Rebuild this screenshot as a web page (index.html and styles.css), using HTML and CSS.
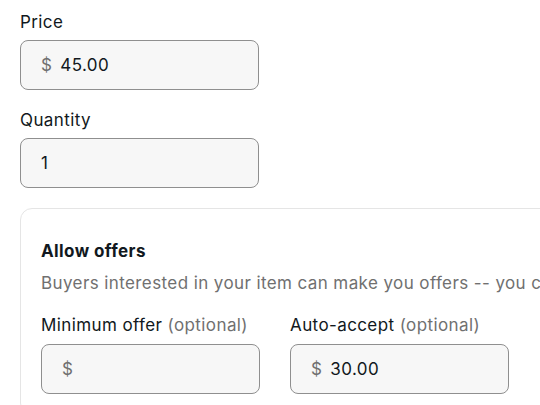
FILE: index.html
```html
<!DOCTYPE html>
<html lang="en">
<head>
  <meta charset="UTF-8">
  <meta name="viewport" content="width=device-width, initial-scale=1.0">
  <title>Pricing</title>
  <link rel="stylesheet" href="styles.css">
</head>
<body>
  <div class="field">
    <label class="label" for="price">Price</label>
    <div class="textbox">
      <span class="prefix">$</span>
      <input id="price" type="text" value="45.00">
    </div>
  </div>

  <div class="field">
    <label class="label" for="qty">Quantity</label>
    <div class="textbox">
      <input id="qty" type="text" value="1">
    </div>
  </div>

  <section class="offers">
    <h3>Allow offers</h3>
    <p class="hint">Buyers interested in your item can make you offers -- you can accept, counter or decline.</p>
    <div class="offer-row">
      <div class="field">
        <label class="label" for="minOffer">Minimum offer <span class="muted">(optional)</span></label>
        <div class="textbox small">
          <span class="prefix">$</span>
          <input id="minOffer" type="text" value="">
        </div>
      </div>
      <div class="field">
        <label class="label" for="autoAccept">Auto-accept <span class="muted">(optional)</span></label>
        <div class="textbox small">
          <span class="prefix">$</span>
          <input id="autoAccept" type="text" value="30.00">
        </div>
      </div>
    </div>
  </section>
</body>
</html>
```

FILE: styles.css
```css
body {
  font-family: Inter, "Open Sans", sans-serif;
  font-size: 17px;
  letter-spacing: 0.4px;
  color: #111820;
  margin: 0;
  padding: 10px 0 0 20px;
  background: #fff;
  overflow: hidden;
}
.field {
  margin-bottom: 18px;
}
.label {
  display: block;
  line-height: 24px;
  margin-bottom: 6px;
}
.muted {
  color: #707070;
}
.textbox {
  display: flex;
  align-items: center;
  width: 239px;
  height: 50px;
  box-sizing: border-box;
  padding: 0 20px;
  background: #f7f7f7;
  border: 1px solid #8f8f8f;
  border-radius: 8px;
}
.textbox.small {
  width: 219px;
}
.prefix {
  color: #707070;
  margin-right: 8px;
}
.textbox input {
  flex: 1;
  min-width: 0;
  border: none;
  background: transparent;
  font: inherit;
  letter-spacing: inherit;
  color: #111820;
  padding: 0;
  outline: none;
}
.offers {
  margin-top: 20px;
  width: 600px;
  border: 1px solid #e5e5e5;
  border-radius: 12px;
  padding: 30px 20px 20px;
}
.offers h3 {
  margin: 0;
  font-size: 17px;
  font-weight: 700;
  line-height: 24px;
}
.hint {
  margin: 8px 0 18px;
  color: #707070;
  line-height: 24px;
  white-space: nowrap;
}
.offer-row {
  display: flex;
  gap: 30px;
}
.offer-row .field {
  margin-bottom: 0;
}
.offer-row .label {
  margin-bottom: 7px;
}
```
